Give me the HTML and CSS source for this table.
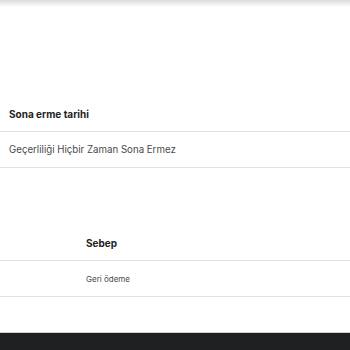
FILE: index.html
```html
<!DOCTYPE html>
<html lang="tr">
<head>
<meta charset="utf-8">
<link rel="stylesheet" href="styles.css">
</head>
<body>
<div class="page">
  <div class="topbar"></div>
  <table class="info first">
    <thead><tr><th>Sona erme tarihi</th></tr></thead>
    <tbody><tr><td>Geçerliliği Hiçbir Zaman Sona Ermez</td></tr></tbody>
  </table>
  <table class="info second">
    <thead><tr><th>Sebep</th></tr></thead>
    <tbody><tr><td>Geri ödeme</td></tr></tbody>
  </table>
  <footer class="footer"></footer>
</div>
</body>
</html>
```
FILE: styles.css
```css
html, body {
  margin: 0;
  padding: 0;
  background: #fff;
}

.page {
  width: 350px;
  height: 350px;
  display: flex;
  flex-direction: column;
  overflow: hidden;
  font-family: Inter, "Noto Sans", sans-serif;
}

.topbar {
  height: 7px;
  background: linear-gradient(#dcdcdc, #ffffff);
}

.info {
  width: 100%;
  border-collapse: collapse;
}

.info th,
.info td {
  text-align: left;
  border-bottom: 1px solid #e3e3e3;
  padding: 0 9px;
  height: 35px;
}

.info th {
  font-size: 10px;
  font-weight: 700;
  color: #222;
  padding-top: 5px;
}

.info td {
  font-size: 9.7px;
  color: #4a4a4a;
}

.first {
  margin-top: 84px;
}

.second {
  margin-top: 52px;
}

.second th,
.second td {
  padding-left: 86px;
}

.second td {
  font-size: 8px;
}

.footer {
  margin-top: auto;
  height: 17px;
  background: #1f2021;
  border-top: 1px solid #cfcfcf;
}
```
